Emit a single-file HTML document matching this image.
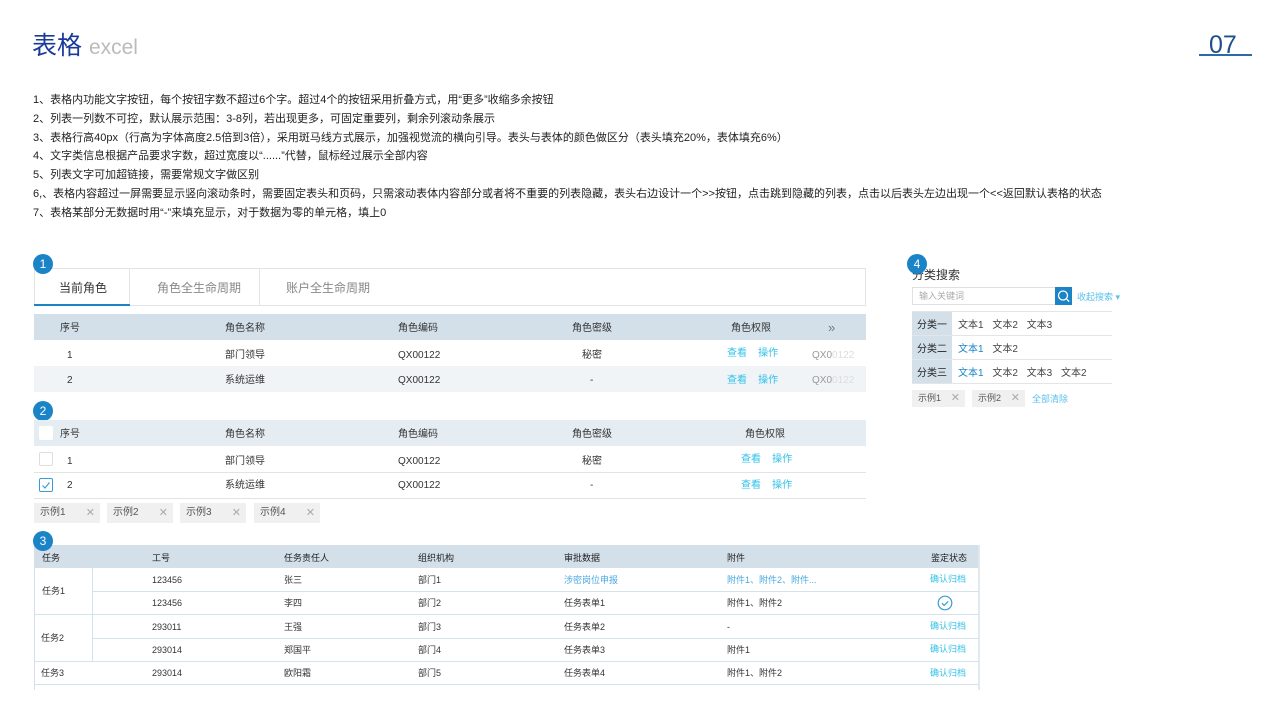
<!DOCTYPE html>
<html><head><meta charset="utf-8"><style>
*{margin:0;padding:0;box-sizing:border-box}
body{width:1280px;height:720px;background:#fff;position:relative;overflow:hidden;font-family:"Liberation Sans","Noto Sans CJK SC",sans-serif;color:#333;line-height:1.3}
.a{position:absolute;white-space:nowrap}
div.a:not([style*="background"]):not([style*="border"]){transform:translateY(2px)}
.c{position:absolute;width:20px;height:20px;border-radius:50%;background:#1b84c6;color:#fff;font-size:12px;text-align:center;line-height:20px}
.f{font-size:10px;color:#333}
.l{color:#33c0e8}
.tag{position:absolute;height:20px;background:#f0f0f0;font-size:10px;color:#555;line-height:20px;padding-left:6px}
.tag span{position:absolute;right:5px;color:#aaa;font-size:11px}
.cb{position:absolute;width:14px;height:14px;border:1px solid #ddd;border-radius:2px;background:#fff}
</style></head><body>
<div class="a" style="left:32px;top:28px;font-size:25px;color:#1a3a9a">表格 <span style="font-size:21px;color:#bbb">excel</span></div>
<div class="a" style="left:1209px;top:27px;font-size:25px;color:#1f4e8c">07</div>
<div class="a" style="left:1199px;top:54px;width:53px;height:2px;background:#2a6aa5"></div>
<div class="a" style="left:33px;top:89px;font-size:11px;line-height:18.8px;color:#222">
1、表格内功能文字按钮，每个按钮字数不超过6个字。超过4个的按钮采用折叠方式，用“更多”收缩多余按钮<br>
2、列表一列数不可控，默认展示范围：3-8列，若出现更多，可固定重要列，剩余列滚动条展示<br>
3、表格行高40px（行高为字体高度2.5倍到3倍），采用斑马线方式展示，加强视觉流的横向引导。表头与表体的颜色做区分（表头填充20%，表体填充6%）<br>
4、文字类信息根据产品要求字数，超过宽度以“......”代替，鼠标经过展示全部内容<br>
5、列表文字可加超链接，需要常规文字做区别<br>
6,、表格内容超过一屏需要显示竖向滚动条时，需要固定表头和页码，只需滚动表体内容部分或者将不重要的列表隐藏，表头右边设计一个>>按钮，点击跳到隐藏的列表，点击以后表头左边出现一个<<返回默认表格的状态<br>
7、表格某部分无数据时用“-”来填充显示，对于数据为零的单元格，填上0</div>

<!-- section 1 -->
<div class="a" style="left:34px;top:268px;width:832px;height:38px;border:1px solid #e3e3e3"></div>
<div class="a" style="left:129px;top:269px;width:1px;height:36px;background:#e3e3e3"></div>
<div class="a" style="left:259px;top:269px;width:1px;height:36px;background:#e3e3e3"></div>
<div class="a" style="left:34px;top:304px;width:96px;height:2px;background:#1b84c6"></div>
<div class="a" style="left:59px;top:279px;font-size:12px;color:#333">当前角色</div>
<div class="a" style="left:157px;top:279px;font-size:12px;color:#888">角色全生命周期</div>
<div class="a" style="left:286px;top:279px;font-size:12px;color:#888">账户全生命周期</div>
<div class="c" style="left:33px;top:254px">1</div>
<div class="a" style="left:34px;top:314px;width:832px;height:26px;background:#d3e0ea"></div>
<div class="a" style="left:34px;top:366px;width:832px;height:26px;background:#f0f4f7"></div>
<div class="a f" style="left:60px;top:320px">序号</div>
<div class="a f" style="left:225px;top:320px">角色名称</div>
<div class="a f" style="left:398px;top:320px">角色编码</div>
<div class="a f" style="left:572px;top:320px">角色密级</div>
<div class="a f" style="left:731px;top:320px">角色权限</div>
<div class="a f" style="left:828px;top:318px;color:#777;font-size:13px">»</div>
<div class="a f" style="left:67px;top:347px">1</div>
<div class="a f" style="left:225px;top:347px">部门领导</div>
<div class="a f" style="left:398px;top:347px">QX00122</div>
<div class="a f" style="left:582px;top:347px">秘密</div>
<div class="a f l" style="left:727px;top:345px">查看&nbsp;&nbsp;&nbsp;&nbsp;操作</div>
<div class="a f" style="left:812px;top:347px;color:#999">QX0<span style="color:#ddd">0122</span></div>
<div class="a f" style="left:67px;top:372px">2</div>
<div class="a f" style="left:225px;top:372px">系统运维</div>
<div class="a f" style="left:398px;top:372px">QX00122</div>
<div class="a f" style="left:590px;top:372px">-</div>
<div class="a f l" style="left:727px;top:372px">查看&nbsp;&nbsp;&nbsp;&nbsp;操作</div>
<div class="a f" style="left:812px;top:372px;color:#999">QX0<span style="color:#ddd">0122</span></div>

<!-- section 2 -->
<div class="c" style="left:33px;top:401px">2</div>
<div class="a" style="left:34px;top:420px;width:832px;height:26px;background:#e5edf3"></div>
<div class="a" style="left:34px;top:472px;width:832px;height:1px;background:#e3e3e3"></div>
<div class="a" style="left:34px;top:498px;width:832px;height:1px;background:#e3e3e3"></div>
<div class="cb" style="left:39px;top:426px;border-color:#fff"></div>
<div class="cb" style="left:39px;top:452px"></div>
<div class="cb" style="left:39px;top:478px;border-color:#3a9bd8"><svg width="12" height="12" style="position:absolute;left:0;top:0"><path d="M2.5 6.5l2.5 2.5 4.5-5.5" stroke="#3a9bd8" stroke-width="1.2" fill="none"/></svg></div>
<div class="a f" style="left:60px;top:426px">序号</div>
<div class="a f" style="left:225px;top:426px">角色名称</div>
<div class="a f" style="left:398px;top:426px">角色编码</div>
<div class="a f" style="left:572px;top:426px">角色密级</div>
<div class="a f" style="left:745px;top:426px">角色权限</div>
<div class="a f" style="left:67px;top:453px">1</div>
<div class="a f" style="left:225px;top:453px">部门领导</div>
<div class="a f" style="left:398px;top:453px">QX00122</div>
<div class="a f" style="left:582px;top:453px">秘密</div>
<div class="a f l" style="left:741px;top:451px">查看&nbsp;&nbsp;&nbsp;&nbsp;操作</div>
<div class="a f" style="left:67px;top:477px">2</div>
<div class="a f" style="left:225px;top:477px">系统运维</div>
<div class="a f" style="left:398px;top:477px">QX00122</div>
<div class="a f" style="left:590px;top:477px">-</div>
<div class="a f l" style="left:741px;top:477px">查看&nbsp;&nbsp;&nbsp;&nbsp;操作</div>
<div class="tag" style="left:34px;top:503px;width:66px">示例1<span>✕</span></div>
<div class="tag" style="left:107px;top:503px;width:66px">示例2<span>✕</span></div>
<div class="tag" style="left:180px;top:503px;width:66px">示例3<span>✕</span></div>
<div class="tag" style="left:254px;top:503px;width:66px">示例4<span>✕</span></div>

<!-- section 3 -->
<div class="a" style="left:34px;top:545px;width:945px;height:23px;background:#d3e0ea"></div>
<div class="a" style="left:34px;top:545px;width:1px;height:145px;background:#d3e0ea"></div>
<div class="a" style="left:978px;top:545px;width:2px;height:145px;background:#e3e8ec"></div>
<div class="a" style="left:92px;top:568px;width:1px;height:93px;background:#d3e3ea"></div>
<div class="a" style="left:92px;top:591px;width:887px;height:1px;background:#d3e3ea"></div>
<div class="a" style="left:34px;top:614px;width:945px;height:1px;background:#d3e3ea"></div>
<div class="a" style="left:92px;top:638px;width:887px;height:1px;background:#d3e3ea"></div>
<div class="a" style="left:34px;top:661px;width:945px;height:1px;background:#d3e3ea"></div>
<div class="a" style="left:34px;top:684px;width:945px;height:1px;background:#d3e3ea"></div>
<div class="c" style="left:33px;top:531px">3</div>
<div class="a" style="left:42px;top:551px;font-size:9px;color:#222">任务</div>
<div class="a" style="left:152px;top:551px;font-size:9px;color:#222">工号</div>
<div class="a" style="left:284px;top:551px;font-size:9px;color:#222">任务责任人</div>
<div class="a" style="left:418px;top:551px;font-size:9px;color:#222">组织机构</div>
<div class="a" style="left:564px;top:551px;font-size:9px;color:#222">审批数据</div>
<div class="a" style="left:727px;top:551px;font-size:9px;color:#222">附件</div>
<div class="a" style="left:931px;top:551px;font-size:9px;color:#222">鉴定状态</div>
<div class="a" style="left:42px;top:584px;font-size:9px">任务1</div>
<div class="a" style="left:41px;top:631px;font-size:9px">任务2</div>
<div class="a" style="left:41px;top:666px;font-size:9px">任务3</div>
<div class="a" style="left:152px;top:573px;font-size:9px">123456</div>
<div class="a" style="left:152px;top:596px;font-size:9px">123456</div>
<div class="a" style="left:152px;top:620px;font-size:9px">293011</div>
<div class="a" style="left:152px;top:643px;font-size:9px">293014</div>
<div class="a" style="left:152px;top:666px;font-size:9px">293014</div>
<div class="a" style="left:284px;top:573px;font-size:9px">张三</div>
<div class="a" style="left:284px;top:596px;font-size:9px">李四</div>
<div class="a" style="left:284px;top:620px;font-size:9px">王强</div>
<div class="a" style="left:284px;top:643px;font-size:9px">郑国平</div>
<div class="a" style="left:284px;top:666px;font-size:9px">欧阳霜</div>
<div class="a" style="left:418px;top:573px;font-size:9px">部门1</div>
<div class="a" style="left:418px;top:596px;font-size:9px">部门2</div>
<div class="a" style="left:418px;top:620px;font-size:9px">部门3</div>
<div class="a" style="left:418px;top:643px;font-size:9px">部门4</div>
<div class="a" style="left:418px;top:666px;font-size:9px">部门5</div>
<div class="a" style="left:564px;top:573px;font-size:9px;color:#4aa8e0">涉密岗位申报</div>
<div class="a" style="left:564px;top:596px;font-size:9px">任务表单1</div>
<div class="a" style="left:564px;top:620px;font-size:9px">任务表单2</div>
<div class="a" style="left:564px;top:643px;font-size:9px">任务表单3</div>
<div class="a" style="left:564px;top:666px;font-size:9px">任务表单4</div>
<div class="a" style="left:727px;top:573px;font-size:9px;color:#4aa8e0">附件1、附件2、附件...</div>
<div class="a" style="left:727px;top:596px;font-size:9px">附件1、附件2</div>
<div class="a" style="left:727px;top:620px;font-size:9px">-</div>
<div class="a" style="left:727px;top:643px;font-size:9px">附件1</div>
<div class="a" style="left:727px;top:666px;font-size:9px">附件1、附件2</div>
<div class="a l" style="left:930px;top:572px;font-size:9px">确认归档</div>
<svg class="a" style="left:937px;top:595px" width="16" height="16"><circle cx="8" cy="8" r="6.8" stroke="#3a9bd8" stroke-width="1.2" fill="none"/><path d="M5 8.2l2.2 2.2 4-4" stroke="#3a9bd8" stroke-width="1.2" fill="none"/></svg>
<div class="a l" style="left:930px;top:619px;font-size:9px">确认归档</div>
<div class="a l" style="left:930px;top:642px;font-size:9px">确认归档</div>
<div class="a l" style="left:930px;top:666px;font-size:9px">确认归档</div>

<!-- section 4 -->
<div class="a" style="left:912px;top:266px;font-size:12px;color:#333">分类搜索</div>
<div class="c" style="left:907px;top:254px">4</div>
<div class="a" style="left:912px;top:287px;width:144px;height:18px;border:1px solid #e0e0e0;font-size:9px;color:#aaa;line-height:16px;padding-left:6px">输入关键词</div>
<div class="a" style="left:1055px;top:287px;width:17px;height:18px;background:#1b84c6"><svg width="17" height="18"><circle cx="8" cy="8.5" r="4.5" stroke="#fff" stroke-width="1.3" fill="none"/><path d="M11.2 11.7l3 3" stroke="#fff" stroke-width="1.3"/></svg></div>
<div class="a" style="left:1077px;top:290px;font-size:9px;color:#5bc0eb">收起搜索 ▾</div>
<div class="a" style="left:912px;top:311px;width:200px;height:1px;background:#e5e5e5"></div>
<div class="a" style="left:912px;top:335px;width:200px;height:1px;background:#e5e5e5"></div>
<div class="a" style="left:912px;top:359px;width:200px;height:1px;background:#e5e5e5"></div>
<div class="a" style="left:912px;top:383px;width:200px;height:1px;background:#e5e5e5"></div>
<div class="a" style="left:912px;top:312px;width:40px;height:71px;background:#d3e0ea"></div>
<div class="a" style="left:912px;top:335px;width:40px;height:1px;background:#e5e5e5"></div>
<div class="a" style="left:912px;top:359px;width:40px;height:1px;background:#e5e5e5"></div>
<div class="a" style="left:917px;top:317px;font-size:10px;color:#222">分类一</div>
<div class="a" style="left:917px;top:341px;font-size:10px;color:#222">分类二</div>
<div class="a" style="left:917px;top:365px;font-size:10px;color:#222">分类三</div>
<div class="a" style="left:958px;top:317px;font-size:10px;color:#444;word-spacing:6px">文本1 文本2 文本3</div>
<div class="a" style="left:958px;top:341px;font-size:10px;color:#444;word-spacing:6px"><span style="color:#1b84c6">文本1</span> 文本2</div>
<div class="a" style="left:958px;top:365px;font-size:10px;color:#444;word-spacing:6px"><span style="color:#1b84c6">文本1</span> 文本2 文本3 文本2</div>
<div class="tag" style="left:912px;top:390px;width:53px;height:17px;line-height:17px;font-size:9px">示例1<span>✕</span></div>
<div class="tag" style="left:972px;top:390px;width:53px;height:17px;line-height:17px;font-size:9px">示例2<span>✕</span></div>
<div class="a" style="left:1032px;top:392px;font-size:9px;color:#5bc0eb">全部清除</div>
</body></html>
